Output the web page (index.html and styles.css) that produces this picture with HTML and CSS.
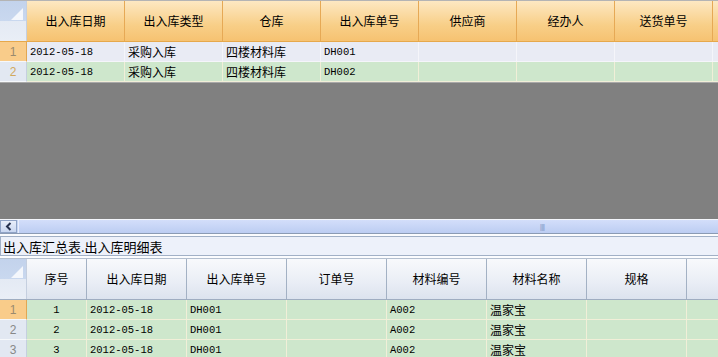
FILE: index.html
```html
<!DOCTYPE html>
<html lang="zh-CN">
<head>
    <meta charset="UTF-8">
    <title>出入库汇总表</title>
    <link rel="stylesheet" href="styles.css">
</head>
<body>
    <div class="page">
        <!-- Summary grid -->
        <div class="top-pane">
            <div class="grid">
                <div class="hdr orange">
                    <div class="corner"><svg width="12" height="12" viewBox="0 0 12 12"><polygon points="12,0 12,12 0,12" fill="#f4f7fc"/></svg></div>
                    <div class="hc w98">出入库日期</div>
                    <div class="hc w98">出入库类型</div>
                    <div class="hc w98">仓库</div>
                    <div class="hc w98">出入库单号</div>
                    <div class="hc w98">供应商</div>
                    <div class="hc w98">经办人</div>
                    <div class="hc w98">送货单号</div>
                    <div class="hc w98"></div>
                </div>
                <div class="row lilac">
                    <div class="rh sel">1</div>
                    <div class="c w98 num">2012-05-18</div>
                    <div class="c w98">采购入库</div>
                    <div class="c w98">四楼材料库</div>
                    <div class="c w98 num">DH001</div>
                    <div class="c w98"></div>
                    <div class="c w98"></div>
                    <div class="c w98"></div>
                    <div class="c w98"></div>
                </div>
                <div class="row green">
                    <div class="rh tan">2</div>
                    <div class="c w98 num">2012-05-18</div>
                    <div class="c w98">采购入库</div>
                    <div class="c w98">四楼材料库</div>
                    <div class="c w98 num">DH002</div>
                    <div class="c w98"></div>
                    <div class="c w98"></div>
                    <div class="c w98"></div>
                    <div class="c w98"></div>
                </div>
            </div>
        </div>

        <!-- Horizontal scrollbar -->
        <div class="hscroll">
            <div class="arrow"><svg width="8" height="9" viewBox="0 0 8 9"><polyline points="5.5,1 2,4.5 5.5,8" fill="none" stroke="#26324f" stroke-width="2"/></svg></div>
            <div class="thumb"><span class="grip">||||</span></div>
        </div>

        <div class="caption-wrap">
            <div class="caption">出入库汇总表.出入库明细表</div>
        </div>

        <!-- Detail grid -->
        <div class="grid detail">
            <div class="hdr blue">
                <div class="corner"><svg width="12" height="12" viewBox="0 0 12 12"><polygon points="12,0 12,12 0,12" fill="#f4f7fc"/></svg></div>
                <div class="hc w60">序号</div>
                <div class="hc w100">出入库日期</div>
                <div class="hc w100">出入库单号</div>
                <div class="hc w100">订单号</div>
                <div class="hc w100">材料编号</div>
                <div class="hc w100">材料名称</div>
                <div class="hc w100">规格</div>
                <div class="hc w100"></div>
            </div>
            <div class="row green">
                <div class="rh sel">1</div>
                <div class="c w60 num center">1</div>
                <div class="c w100 num">2012-05-18</div>
                <div class="c w100 num">DH001</div>
                <div class="c w100"></div>
                <div class="c w100 num">A002</div>
                <div class="c w100">温家宝</div>
                <div class="c w100"></div>
                <div class="c w100"></div>
            </div>
            <div class="row green">
                <div class="rh">2</div>
                <div class="c w60 num center">2</div>
                <div class="c w100 num">2012-05-18</div>
                <div class="c w100 num">DH001</div>
                <div class="c w100"></div>
                <div class="c w100 num">A002</div>
                <div class="c w100">温家宝</div>
                <div class="c w100"></div>
                <div class="c w100"></div>
            </div>
            <div class="row green">
                <div class="rh">3</div>
                <div class="c w60 num center">3</div>
                <div class="c w100 num">2012-05-18</div>
                <div class="c w100 num">DH001</div>
                <div class="c w100"></div>
                <div class="c w100 num">A002</div>
                <div class="c w100">温家宝</div>
                <div class="c w100"></div>
                <div class="c w100"></div>
            </div>
        </div>
    </div>
</body>
</html>
```

FILE: styles.css
```css
body {
    margin: 0;
    font-family: "Noto Sans CJK SC", "Liberation Sans", sans-serif;
    font-size: 12px;
    color: #000;
    background-color: #fff;
}
.page {
    width: 718px;
    height: 357px;
    overflow: hidden;
    display: flex;
    flex-direction: column;
}
.top-pane {
    height: 219px;
    flex: none;
    background-color: #808080;
    border-top: 1px solid #b4b4b4;
    box-sizing: border-box;
}
.grid {
    display: flex;
    flex-direction: column;
    width: 718px;
    overflow: hidden;
}
.top-pane .grid {
    border-bottom: 1px solid #a9a9a9;
}
.hdr, .row {
    display: flex;
    flex: none;
}
.hdr {
    height: 40px;
}
.row {
    height: 20px;
}
.hc, .c, .rh, .corner {
    flex: none;
    box-sizing: border-box;
}
.w98 { width: 98px; }
.w100 { width: 100px; }
.w60 { width: 60px; }
.corner {
    width: 27px;
    display: flex;
    align-items: flex-start;
    justify-content: flex-end;
    padding: 7px 3px 0 0;
    background: linear-gradient(#c3d3ec 0, #c9d8ef 50%, #e4eaf4 50%, #e9eef6 100%);
    border-right: 1px solid #c5cfdf;
}
.hc {
    display: flex;
    align-items: center;
    justify-content: center;
    font-size: 12px;
    padding-bottom: 2px;
}
.orange {
    background: linear-gradient(#fde8c2, #f8cf88 60%, #f6c271);
    border-bottom: 1px solid #e6a84b;
}
.orange .hc {
    border-right: 1px solid #e6a955;
}
.blue {
    background: linear-gradient(#f8f9fc, #e9edf5 60%, #dce3ee);
    border-bottom: 1px solid #9fadc1;
}
.blue .hc {
    border-right: 1px solid #a3b1c4;
}
.rh {
    width: 27px;
    display: flex;
    align-items: center;
    justify-content: center;
    font-family: "Liberation Sans", sans-serif;
    color: #888;
    background-color: #e2e8f2;
    border-right: 1px solid #c5cfdf;
    border-bottom: 1px solid #f6f8fb;
}
.rh.sel {
    background-color: #f9cc8a;
    color: #9a8a6e;
    border-right-color: #e2a753;
}
.rh.tan {
    color: #d1a95e;
}
.c {
    display: flex;
    align-items: center;
    padding: 0 3px;
    white-space: nowrap;
    border-right: 1px solid #f1f2ea;
    border-bottom: 1px solid #f1f2ea;
}
.lilac .c {
    background-color: #e9ebf4;
    border-color: #f5f5fa;
}
.green .c {
    background-color: #cee7cc;
    border-color: #f1efd8;
}
.num {
    font-family: "Liberation Mono", monospace;
    font-size: 10.5px;
}
.center {
    justify-content: center;
}
.hscroll {
    flex: none;
    height: 15px;
    display: flex;
    background-color: #c6d6f4;
    border-top: 1px solid #f4f6fb;
    border-bottom: 1px solid #8b9bb4;
    box-sizing: border-box;
}
.arrow {
    width: 17px;
    flex: none;
    display: flex;
    align-items: center;
    justify-content: center;
    background: linear-gradient(#e8eefa, #c9d7f1);
    border: 1px solid #8fa3c6;
    box-sizing: border-box;
}
.thumb {
    flex: none;
    width: 1046px;
    margin-left: 1px;
    display: flex;
    align-items: center;
    justify-content: center;
    background: linear-gradient(#d3defa, #bccdf2);
    border-left: 1px solid #e9eefb;
}
.grip {
    font-family: "Liberation Sans", sans-serif;
    font-size: 8px;
    letter-spacing: -1px;
    color: #8c9ccc;
}
.caption-wrap {
    flex: none;
    padding: 2px 0 2px 0;
    background-color: #fbfcfe;
}
.caption {
    height: 20px;
    display: flex;
    align-items: center;
    padding-left: 2px;
    font-size: 13px;
    background-color: #edf1fa;
    border-top: 1px solid #a1b0c6;
    border-bottom: 1px solid #a1b0c6;
    border-left: 1px solid #a1b0c6;
    box-sizing: border-box;
}
.detail .hdr {
    border-top: 1px solid #b3bfcf;
}
```
